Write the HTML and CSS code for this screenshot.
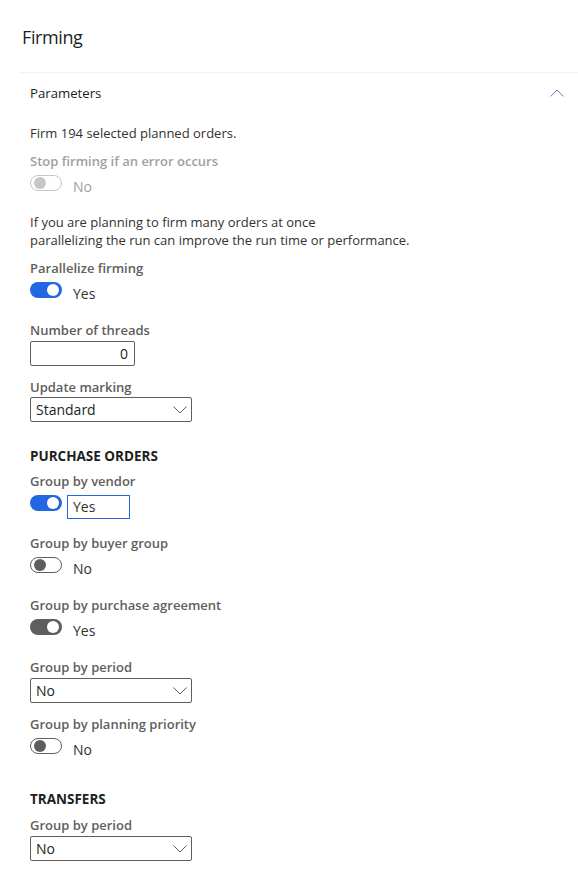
FILE: index.html
```html
<!DOCTYPE html>
<html lang="en">
<head>
<meta charset="utf-8">
<title>Firming</title>
<link rel="stylesheet" href="styles.css">
</head>
<body>
<div class="page">
  <h1 class="title">Firming</h1>
  <section class="section">
    <div class="section-header">
      <span class="section-title">Parameters</span>
      <svg class="chev-up" width="14" height="8" viewBox="0 0 14 8"><polyline points="0.5,7.5 7,1 13.5,7.5" fill="none" stroke="currentColor" stroke-width="1"/></svg>
    </div>
    <div class="section-body">
      <p class="text info">Firm 194 selected planned orders.</p>

      <div class="field field-toggle disabled">
        <div class="label">Stop firming if an error occurs</div>
        <div class="toggle-row">
          <span class="toggle off"><span class="thumb"></span></span>
          <span class="value">No</span>
        </div>
      </div>

      <p class="text note">If you are planning to firm many orders at once<br>parallelizing the run can improve the run time or performance.</p>

      <div class="field field-toggle">
        <div class="label">Parallelize firming</div>
        <div class="toggle-row">
          <span class="toggle on"><span class="thumb"></span></span>
          <span class="value">Yes</span>
        </div>
      </div>

      <div class="field field-input">
        <div class="label">Number of threads</div>
        <div class="input num">0</div>
      </div>

      <div class="field field-input tight last">
        <div class="label">Update marking</div>
        <div class="input select"><span>Standard</span>
          <svg class="chev-down" width="14" height="8" viewBox="0 0 14 8"><polyline points="0.5,0.5 7,7 13.5,0.5" fill="none" stroke="currentColor" stroke-width="1"/></svg>
        </div>
      </div>

      <h2 class="group-heading">PURCHASE ORDERS</h2>

      <div class="field field-toggle">
        <div class="label">Group by vendor</div>
        <div class="toggle-row">
          <span class="toggle on"><span class="thumb"></span></span>
          <span class="value focused">Yes</span>
        </div>
      </div>

      <div class="field field-toggle">
        <div class="label">Group by buyer group</div>
        <div class="toggle-row">
          <span class="toggle off"><span class="thumb"></span></span>
          <span class="value">No</span>
        </div>
      </div>

      <div class="field field-toggle">
        <div class="label">Group by purchase agreement</div>
        <div class="toggle-row">
          <span class="toggle on gray"><span class="thumb"></span></span>
          <span class="value">Yes</span>
        </div>
      </div>

      <div class="field field-input">
        <div class="label">Group by period</div>
        <div class="input select"><span>No</span>
          <svg class="chev-down" width="14" height="8" viewBox="0 0 14 8"><polyline points="0.5,0.5 7,7 13.5,0.5" fill="none" stroke="currentColor" stroke-width="1"/></svg>
        </div>
      </div>

      <div class="field field-toggle last">
        <div class="label">Group by planning priority</div>
        <div class="toggle-row">
          <span class="toggle off"><span class="thumb"></span></span>
          <span class="value">No</span>
        </div>
      </div>

      <h2 class="group-heading second">TRANSFERS</h2>

      <div class="field field-input">
        <div class="label">Group by period</div>
        <div class="input select"><span>No</span>
          <svg class="chev-down" width="14" height="8" viewBox="0 0 14 8"><polyline points="0.5,0.5 7,7 13.5,0.5" fill="none" stroke="currentColor" stroke-width="1"/></svg>
        </div>
      </div>
    </div>
  </section>
</div>
</body>
</html>
```
FILE: styles.css
```css
* { box-sizing: border-box; }
html, body { margin: 0; padding: 0; background: #ffffff; }
body {
  font-family: "Open Sans", "Noto Sans", sans-serif;
  font-size: 13px;
  color: #323130;
}
.page { padding: 23px 0 0 20px; }
.title {
  margin: 0 0 21px 2px;
  font-size: 18px;
  letter-spacing: -0.4px;
  font-weight: 400;
  line-height: 28px;
  color: #201f1e;
}
.section { border-top: 1px solid #f3f2f1; }
.section-header {
  height: 40px;
  display: flex;
  align-items: center;
  justify-content: space-between;
  padding: 0 14px 0 10px;
}
.section-title { font-size: 13.2px; color: #201f1e; }
.chev-up { color: #5e88b3; display: block; }
.section-body { padding: 11px 0 20px 10px; }

.text { margin: 0; line-height: 18px; }
.info { margin-bottom: 10px; }
.note { margin-bottom: 10px; }

.label {
  font-weight: 600;
  color: #605e5c;
  line-height: 18px;
}
.field { display: flex; flex-direction: column; align-items: flex-start; }
.field-toggle { gap: 5px; margin-bottom: 15px; }
.field-toggle.disabled { margin-bottom: 14px; }
.field-input { gap: 2px; margin-bottom: 12px; }
.field-input.tight { gap: 1px; }
.field.last { margin-bottom: 25px; }
.field-toggle.last { margin-bottom: 28px; }

.disabled .label, .disabled .value { color: #a19f9d; }

.toggle-row { display: flex; align-items: flex-start; height: 24px; }
.toggle {
  position: relative;
  width: 32px;
  height: 16px;
  border-radius: 8px;
  flex: none;
}
.toggle .thumb {
  position: absolute;
  top: 2px;
  width: 12px;
  height: 12px;
  border-radius: 50%;
}
.toggle.on { background: #2266e3; }
.toggle.on .thumb { right: 3px; background: #ffffff; }
.toggle.on.gray { background: #605e5c; }
.toggle.off { border: 1px solid #605e5c; background: #ffffff; }
.toggle.off .thumb { left: 3px; top: 1px; background: #605e5c; }
.disabled .toggle.off { border-color: #c8c6c4; }
.disabled .toggle.off .thumb { background: #c8c6c4; }

.value {
  margin-left: 5px;
  width: 63px;
  height: 24px;
  padding: 0 5px;
  border: 1px solid transparent;
  line-height: 22px;
  font-size: 14px;
  color: #323130;
}
.value.focused { border-color: #2266e3; }

.input {
  height: 25px;
  border: 1px solid #605e5c;
  border-radius: 2px;
  font-size: 14px;
  line-height: 23px;
  color: #201f1e;
  display: flex;
  align-items: center;
}
.num { width: 105px; justify-content: flex-end; padding: 0 6px; }
.select { width: 162px; justify-content: space-between; padding: 0 4px 0 5px; }
.chev-down { color: #605e5c; display: block; }

.group-heading {
  margin: 0 0 7px 0;
  font-size: 13.5px;
  font-weight: 700;
  line-height: 18px;
  color: #201f1e;
}
.group-heading.second { margin-bottom: 8px; }
```
